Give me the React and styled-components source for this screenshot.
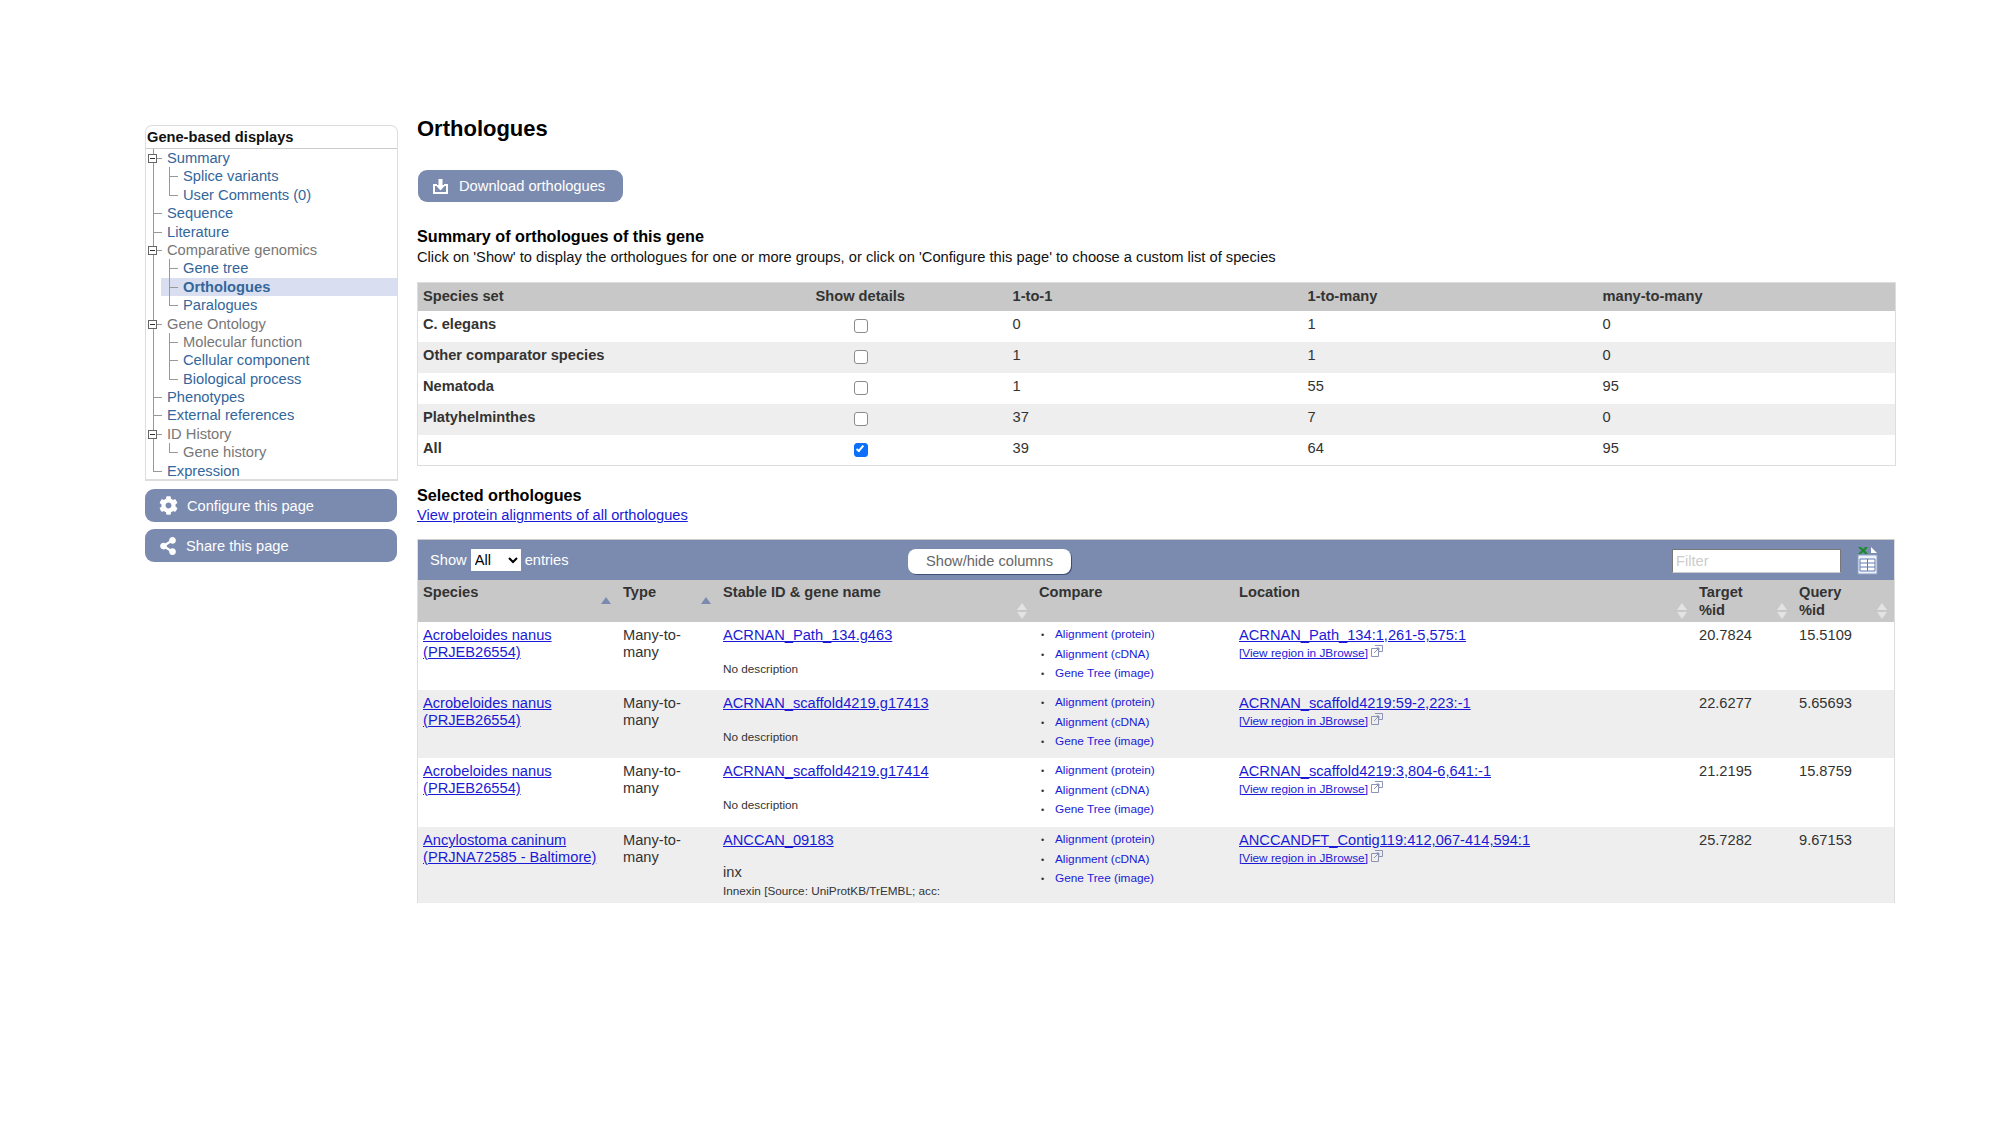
import React from 'react'
import styled, { createGlobalStyle } from 'styled-components'
import { FaCog, FaShareAlt } from 'react-icons/fa'

const GlobalStyle = createGlobalStyle`
  html, body {
    margin: 0;
    padding: 0;
    background: #fff;
    font-family: "Liberation Sans", Arial, sans-serif;
    font-size: 14.65px;
    color: #333;
  }
`

const tree = [
  { label: 'Summary', toggle: true, children: [{ label: 'Splice variants' }, { label: 'User Comments (0)' }] },
  { label: 'Sequence' },
  { label: 'Literature' },
  {
    label: 'Comparative genomics', muted: true, toggle: true,
    children: [{ label: 'Gene tree' }, { label: 'Orthologues', active: true }, { label: 'Paralogues' }],
  },
  {
    label: 'Gene Ontology', muted: true, toggle: true,
    children: [{ label: 'Molecular function', muted: true }, { label: 'Cellular component' }, { label: 'Biological process' }],
  },
  { label: 'Phenotypes' },
  { label: 'External references' },
  { label: 'ID History', muted: true, toggle: true, children: [{ label: 'Gene history', muted: true }] },
  { label: 'Expression' },
]

const summary = [
  ['C. elegans', 0, 1, 0],
  ['Other comparator species', 1, 1, 0],
  ['Nematoda', 1, 55, 95],
  ['Platyhelminthes', 37, 7, 0],
  ['All', 39, 64, 95, true],
]

const orthologues = [
  {
    species: ['Acrobeloides nanus', '(PRJEB26554)'], id: 'ACRNAN_Path_134.g463',
    location: 'ACRNAN_Path_134:1,261-5,575:1', target: '20.7824', query: '15.5109', height: 68,
  },
  {
    species: ['Acrobeloides nanus', '(PRJEB26554)'], id: 'ACRNAN_scaffold4219.g17413',
    location: 'ACRNAN_scaffold4219:59-2,223:-1', target: '22.6277', query: '5.65693', height: 68,
  },
  {
    species: ['Acrobeloides nanus', '(PRJEB26554)'], id: 'ACRNAN_scaffold4219.g17414',
    location: 'ACRNAN_scaffold4219:3,804-6,641:-1', target: '21.2195', query: '15.8759', height: 69,
  },
  {
    species: ['Ancylostoma caninum', '(PRJNA72585 - Baltimore)'], id: 'ANCCAN_09183', gene: 'inx',
    location: 'ANCCANDFT_Contig119:412,067-414,594:1', target: '25.7282', query: '9.67153', height: 90,
  },
]

const columns = [
  { label: 'Species', width: 200, sort: 'up' },
  { label: 'Type', width: 100, sort: 'up' },
  { label: 'Stable ID & gene name', width: 316, sort: 'both' },
  { label: 'Compare', width: 200 },
  { label: 'Location', width: 460, sort: 'both' },
  { label: 'Target %id', width: 100, sort: 'both' },
  { label: 'Query %id', width: 100, sort: 'both' },
]

function DownloadIcon() {
  return (
    <svg width="17" height="17" viewBox="0 0 17 17" fill="#fff">
      <path d="M1 6h4v2H3v6h11V8h-2V6h4v10H1z" />
      <path d="M6.5 1h4v6h3l-5 5.5L3.500 7h3z" />
    </svg>
  )
}

function ExcelIcon() {
  return (
    <svg width="21" height="29" viewBox="0 0 21 29">
      <path d="M1 9h19v19H1z" fill="#eef2fa" stroke="#8d9fc0" />
      <path d="M3 13h15v12H3z" fill="#fff" stroke="#5f7fb0" />
      <path d="M3 17h15M3 21h15M10.500 13v12" stroke="#5f7fb0" />
      <path d="M14 1l6 6h-6z" fill="#fff" />
      <path d="M1 1h3l2 2 2-2h3L8 4.500 11 8H8L6 6 4 8H1l3.500-3.500z" fill="#1c8a2e" />
    </svg>
  )
}

function NewWindowIcon() {
  return (
    <svg width="12" height="12" viewBox="0 0 12 12" fill="none" stroke="#8c93b5">
      <path d="M.5 3.500h7v8h-7z" />
      <path d="M4 .5h7.500v6H8M3 8l5-5M5.500 3H8v2.500" />
    </svg>
  )
}

function SortArrows({ type }) {
  return (
    <Arrows $single={type === 'up'}>
      <svg width="10" height="16" viewBox="0 0 10 16">
        <path d="M5 0l5 7H0z" fill={type === 'up' ? '#7b8bb0' : '#e3e3e3'} />
        {type === 'both' && <path d="M5 16l5-7H0z" fill="#e3e3e3" />}
      </svg>
    </Arrows>
  )
}

function TreeNodes({ items }) {
  return items.map((item, i) => (
    <Node key={item.label} $last={i === items.length - 1}>
      {item.toggle && <Toggle />}
      <NodeLabel $muted={item.muted} $active={item.active}>{item.label}</NodeLabel>
      {item.children && (
        <SubTree>
          <TreeNodes items={item.children} />
        </SubTree>
      )}
    </Node>
  ))
}

export default function App() {
  return (
    <>
      <GlobalStyle />
      <Page>
        <Sidebar>
          <TreeBox>
            <TreeTitle>Gene-based displays</TreeTitle>
            <Tree>
              <TreeNodes items={tree} />
            </Tree>
          </TreeBox>
          <SideButton><FaCog size={19} />Configure this page</SideButton>
          <SideButton><FaShareAlt size={18} />Share this page</SideButton>
        </Sidebar>
        <Main>
          <Title>Orthologues</Title>
          <DownloadButton><DownloadIcon />Download orthologues</DownloadButton>
          <Heading $top={25}>Summary of orthologues of this gene</Heading>
          <Intro>Click on 'Show' to display the orthologues for one or more groups, or click on 'Configure this page' to choose a custom list of species</Intro>
          <SummaryTable>
            <colgroup>
              <Col $w={393} /><Col $w={197} /><Col $w={295} /><Col $w={295} /><Col $w={298} />
            </colgroup>
            <thead>
              <tr>
                <SummaryHead>Species set</SummaryHead>
                <SummaryHead>Show details</SummaryHead>
                <SummaryHead>1-to-1</SummaryHead>
                <SummaryHead>1-to-many</SummaryHead>
                <SummaryHead>many-to-many</SummaryHead>
              </tr>
            </thead>
            <tbody>
              {summary.map(([name, a, b, c, checked]) => (
                <StripedRow key={name}>
                  <SummaryCell><b>{name}</b></SummaryCell>
                  <CheckCell><Check type="checkbox" defaultChecked={!!checked} /></CheckCell>
                  <SummaryCell>{a}</SummaryCell>
                  <SummaryCell>{b}</SummaryCell>
                  <SummaryCell>{c}</SummaryCell>
                </StripedRow>
              ))}
            </tbody>
          </SummaryTable>
          <Heading $top={20}>Selected orthologues</Heading>
          <PageLink href="#">View protein alignments of all orthologues</PageLink>
          <TableFrame>
            <Toolbar>
              <ShowEntries>
                Show
                <EntriesSelect defaultValue="All"><option>All</option></EntriesSelect>
                entries
              </ShowEntries>
              <ColumnsButton>Show/hide columns</ColumnsButton>
              <FilterBox placeholder="Filter" />
              <ExcelIcon />
            </Toolbar>
            <DataTable>
              <colgroup>
                {columns.map((c) => <Col key={c.label} $w={c.width} />)}
              </colgroup>
              <thead>
                <tr>
                  {columns.map((c) => (
                    <DataHead key={c.label}>
                      {c.label}
                      {c.sort && <SortArrows type={c.sort} />}
                    </DataHead>
                  ))}
                </tr>
              </thead>
              <tbody>
                {orthologues.map((row) => (
                  <StripedRow key={row.id} style={{ height: row.height }}>
                    <DataCell>
                      <PageLink href="#">{row.species[0]}<br />{row.species[1]}</PageLink>
                    </DataCell>
                    <DataCell>Many-to-<br />many</DataCell>
                    <DataCell>
                      <PageLink href="#">{row.id}</PageLink>
                      {row.gene ? (
                        <>
                          <GeneName>{row.gene}</GeneName>
                          <Description>
                            Innexin [Source: UniProtKB/TrEMBL; acc:<br />
                            <SmallLink href="#">A0A016SXW6</SmallLink> ]
                          </Description>
                        </>
                      ) : (
                        <Description $top={16}>No description</Description>
                      )}
                    </DataCell>
                    <CompareCell>
                      <CompareList>
                        <li><SmallLink href="#" $plain>Alignment (protein)</SmallLink></li>
                        <li><SmallLink href="#" $plain>Alignment (cDNA)</SmallLink></li>
                        <li><SmallLink href="#" $plain>Gene Tree (image)</SmallLink></li>
                      </CompareList>
                    </CompareCell>
                    <DataCell>
                      <PageLink href="#">{row.location}</PageLink>
                      <Browse>
                        <SmallLink href="#">[View region in JBrowse]</SmallLink>
                        <NewWindowIcon />
                      </Browse>
                    </DataCell>
                    <DataCell>{row.target}</DataCell>
                    <DataCell>{row.query}</DataCell>
                  </StripedRow>
                ))}
              </tbody>
            </DataTable>
          </TableFrame>
        </Main>
      </Page>
    </>
  )
}

const Page = styled.div`
  display: flex;
  align-items: flex-start;
  gap: 19px;
  padding: 116px 0 0 145px;
  height: 1009px;
  overflow: hidden;
`

const Sidebar = styled.aside`
  width: 253px;
  flex: none;
  margin-top: 9px;
  display: flex;
  flex-direction: column;
  gap: 7px;
`

const TreeBox = styled.nav`
  border: 1px solid #ddd;
  border-radius: 7px 7px 0 0;
  border-bottom: 2px solid #ddd;
  margin-bottom: 1px;
  height: 356px;
  box-sizing: border-box;
`

const TreeTitle = styled.div`
  height: 22px;
  line-height: 22px;
  padding-left: 1px;
  font-size: 14.65px;
  font-weight: bold;
  color: #111;
  border-bottom: 1px solid #ccc;
`

const Tree = styled.ul`
  list-style: none;
  margin: 0;
  padding: 0 0 0 7px;
`

const SubTree = styled.ul`
  list-style: none;
  margin: 0 0 0 2px;
  padding: 0;
`

const Node = styled.li`
  position: relative;
  padding-left: 14px;

  &::before {
    content: '';
    position: absolute;
    left: 0;
    top: 0;
    bottom: ${(p) => (p.$last ? 'auto' : '0')};
    height: ${(p) => (p.$last ? '9px' : 'auto')};
    border-left: 1px solid #999;
    z-index: 1;
  }

  &::after {
    content: '';
    position: absolute;
    left: 0;
    top: 9px;
    width: 9px;
    border-top: 1px solid #999;
    z-index: 1;
  }
`

const Toggle = styled.span`
  position: absolute;
  left: -5px;
  top: 5px;
  width: 7px;
  height: 7px;
  border: 1px solid #666;
  background: #fff;
  z-index: 2;

  &::after {
    content: '';
    position: absolute;
    left: 1px;
    right: 1px;
    top: 3px;
    border-top: 1px solid #333;
  }
`

const NodeLabel = styled.div`
  height: 18.4px;
  line-height: 18.4px;
  font-size: 14.7px;
  color: ${(p) => (p.$muted ? '#777' : '#33669b')};
  font-weight: ${(p) => (p.$active ? 'bold' : 'normal')};
  ${(p) => p.$active && `
    margin-left: -22px;
    padding-left: 22px;
    background: #d9dff0;
  `}
`

const SideButton = styled.button`
  display: flex;
  align-items: center;
  gap: 9px;
  width: 252px;
  height: 33px;
  padding: 0 0 0 14px;
  border: none;
  border-radius: 9px;
  background: #7b8bb0;
  color: #fff;
  font-family: inherit;
  font-size: 14.65px;
`

const Main = styled.main`
  width: 1478px;
  flex: none;
`

const Title = styled.h1`
  margin: 0;
  height: 26px;
  line-height: 26px;
  font-size: 22px;
  color: #000;
`

const DownloadButton = styled.button`
  display: flex;
  align-items: center;
  gap: 10px;
  margin: 28px 0 0 1px;
  width: 205px;
  height: 32px;
  padding: 0 0 0 14px;
  border: none;
  border-radius: 9px;
  background: #7b8bb0;
  color: #fff;
  font-family: inherit;
  font-size: 14.7px;
`

const Heading = styled.h2`
  margin: ${(p) => p.$top}px 0 3px;
  height: 18px;
  line-height: 18px;
  font-size: 16.2px;
  color: #000;
`

const Intro = styled.p`
  margin: 0 0 16px;
  height: 18px;
  line-height: 18px;
  font-size: 14.7px;
  color: #111;
`

const SummaryTable = styled.table`
  width: 1478px;
  table-layout: fixed;
  border-collapse: collapse;
  border: 1px solid #ddd;
`

const Col = styled.col`
  width: ${(p) => p.$w}px;
`

const SummaryHead = styled.th`
  height: 28px;
  padding: 0 5px 1px;
  box-sizing: border-box;
  background: #c8c8c8;
  text-align: left;
  font-size: 14.65px;
  color: #333;
`

const StripedRow = styled.tr`
  background: #fff;

  tbody &:nth-child(even) {
    background: #eee;
  }
`

const SummaryCell = styled.td`
  height: 31px;
  padding: 5px 5px 0;
  box-sizing: border-box;
  vertical-align: top;
  line-height: 17px;
  font-size: 14.65px;
`

const CheckCell = styled(SummaryCell)`
  padding: 8px 0 0 43px;
`

const Check = styled.input`
  appearance: none;
  display: block;
  position: relative;
  width: 14px;
  height: 14px;
  margin: 0;
  box-sizing: border-box;
  border: 1px solid #8b8b8b;
  border-radius: 3px;
  background: #fff;

  &:checked {
    border-color: #0b6ffb;
    background: #0b6ffb;
  }

  &:checked::after {
    content: '';
    position: absolute;
    left: 3.500px;
    top: 0.5px;
    width: 4px;
    height: 8px;
    border: solid #fff;
    border-width: 0 2px 2px 0;
    box-sizing: border-box;
    transform: rotate(40deg);
  }
`

const PageLink = styled.a`
  color: #1a1ad6;
  font-size: 14.65px;
  line-height: 17px;
`

const TableFrame = styled.section`
  margin-top: 15px;
  height: 364px;
  overflow: hidden;
  border-left: 1px solid #ddd;
  border-right: 1px solid #ddd;
`

const Toolbar = styled.div`
  display: flex;
  align-items: center;
  height: 41px;
  box-sizing: border-box;
  border-top: 1px solid #ccc;
  background: #7b8bb0;
  padding: 0 16px 0 12px;
`

const ShowEntries = styled.label`
  display: flex;
  align-items: center;
  gap: 4px;
  width: 478px;
  color: #fff;
  font-size: 14.65px;
`

const EntriesSelect = styled.select`
  width: 50px;
  height: 22px;
  border: none;
  background: #fff;
  color: #000;
  font-family: inherit;
  font-size: 14.65px;
`

const ColumnsButton = styled.button`
  width: 163px;
  height: 25px;
  margin-top: 2px;
  padding: 0;
  border: none;
  border-radius: 8px;
  box-shadow: 1px 1px 0 #3f4f78;
  background: #fff;
  color: #666;
  font-family: inherit;
  font-size: 14.65px;
`

const FilterBox = styled.input`
  width: 169px;
  height: 24px;
  margin: 2px 16px 0 auto;
  padding: 0 3px;
  box-sizing: border-box;
  border: 1px solid #777;
  border-bottom-color: #ccc;
  background: #fff;
  font-family: inherit;
  font-size: 14.65px;

  &::placeholder {
    color: #ccc;
  }
`

const DataTable = styled.table`
  width: 1476px;
  table-layout: fixed;
  border-collapse: collapse;
`

const DataHead = styled.th`
  position: relative;
  height: 42px;
  padding: 3px 32px 0 5px;
  box-sizing: border-box;
  background: #c8c8c8;
  text-align: left;
  vertical-align: top;
  line-height: 18px;
  font-size: 14.65px;
  color: #333;
`

const Arrows = styled.span`
  position: absolute;
  right: 7px;
  top: ${(p) => (p.$single ? '17px' : '23px')};
  line-height: 0;

  svg {
    display: block;
  }
`

const DataCell = styled.td`
  padding: 5px 5px 0;
  vertical-align: top;
  line-height: 17px;
  font-size: 14.65px;
  color: #333;
`

const CompareCell = styled(DataCell)`
  padding-top: 0;
`

const CompareList = styled.ul`
  list-style: none;
  margin: 3px 0 0;
  padding: 0 0 0 16px;
  font-size: 11.8px;

  li {
    height: 19.7px;
    line-height: 19.7px;
  }

  li::before {
    content: '•';
    display: inline-block;
    width: 14px;
    margin-left: -14px;
    font-size: 9px;
    line-height: 1;
    color: #333;
  }
`

const SmallLink = styled.a`
  color: #1a1ad6;
  font-size: 11.8px;
  text-decoration: ${(p) => (p.$plain ? 'none' : 'underline')};
`

const Browse = styled.div`
  display: flex;
  align-items: flex-start;
  gap: 3px;
  height: 17px;
  margin-top: 1px;
  line-height: 17px;
`

const Description = styled.div`
  margin-top: ${(p) => p.$top || 0}px;
  font-size: 11.75px;
  line-height: 17px;
  color: #333;
`

const GeneName = styled.div`
  margin-top: 14px;
  font-size: 14.65px;
  line-height: 19px;
`
